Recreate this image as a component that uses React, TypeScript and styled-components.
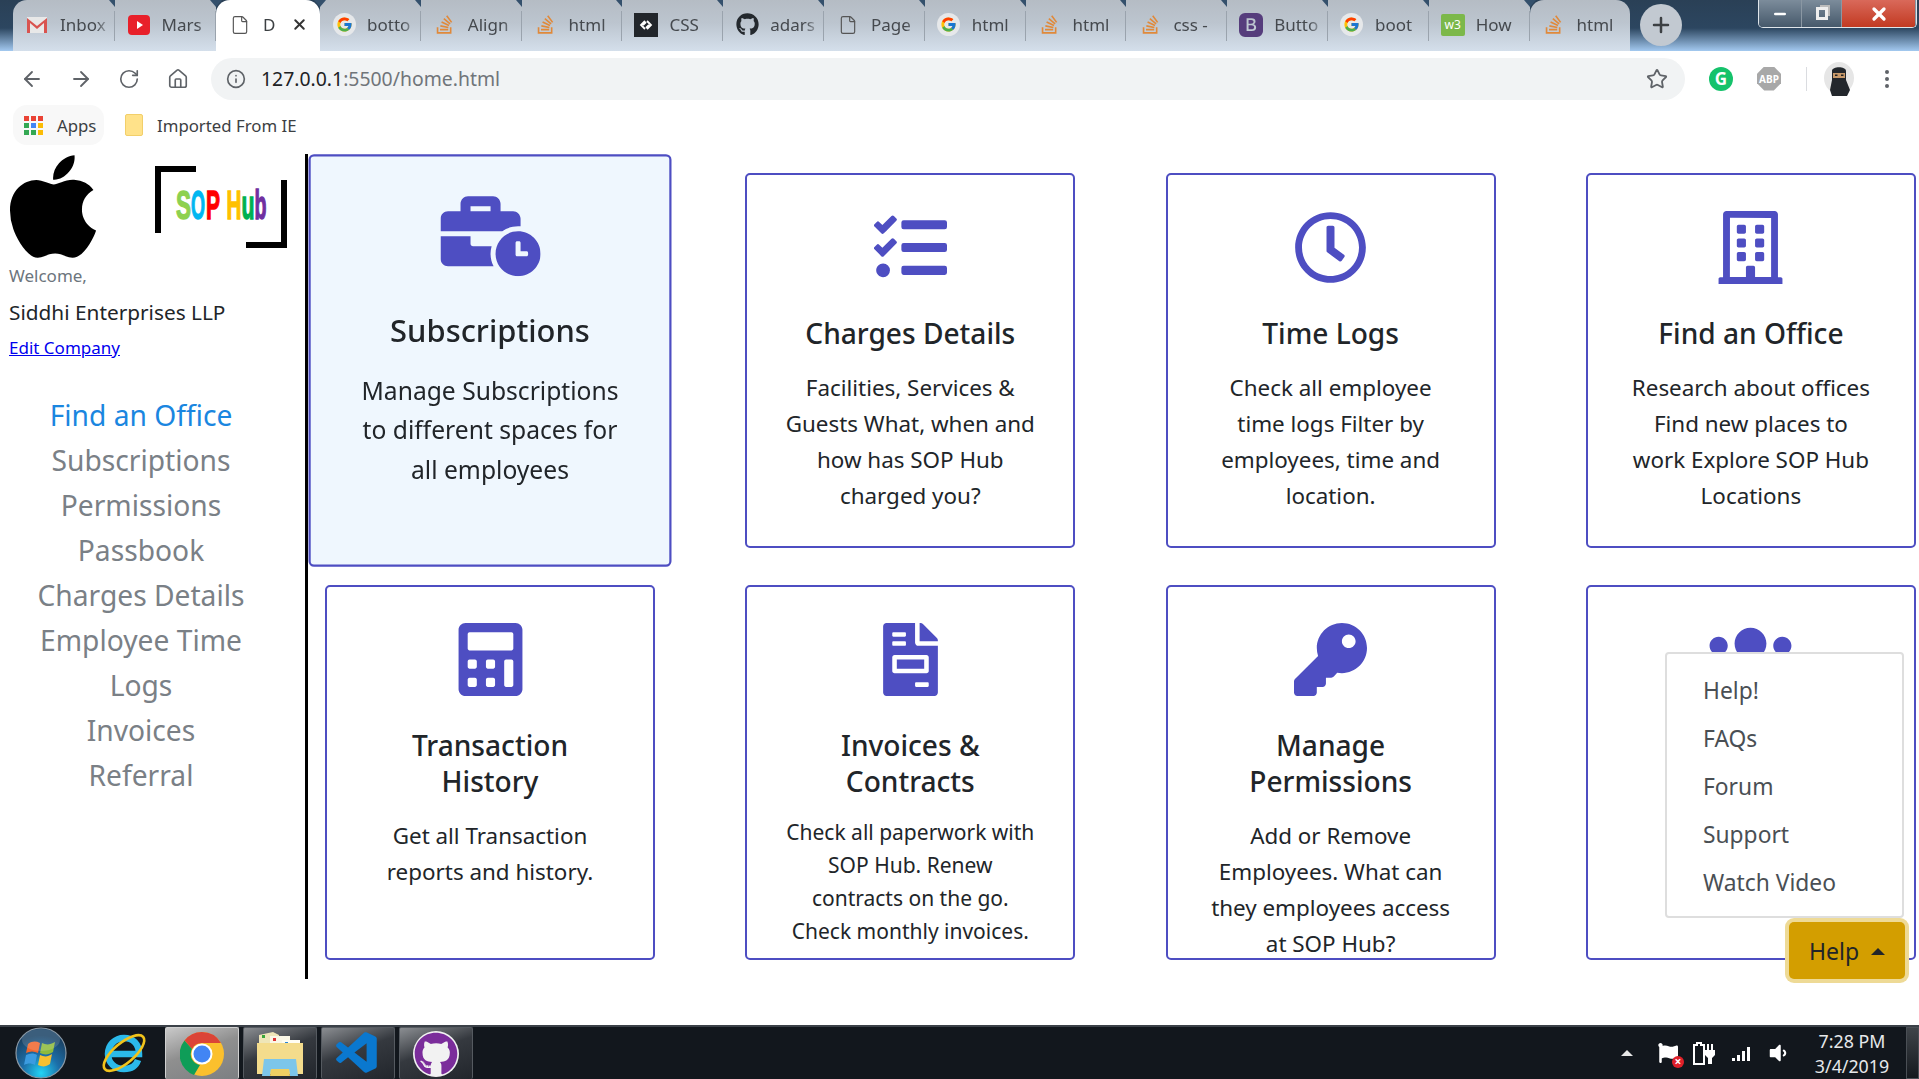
import React from "react";
import styled, { createGlobalStyle } from "styled-components";
import { ArrowLeft, ArrowRight, RotateCw, House, Info, Star, File, Plus, X, Minus } from "lucide-react";
import {
  FaBusinessTime,
  FaTasks,
  FaRegClock,
  FaRegBuilding,
  FaCalculator,
  FaFileInvoice,
  FaKey,
  FaUsers,
  FaStackOverflow,
  FaGithub,
  FaFlag,
  FaVolumeDown,
} from "react-icons/fa";
import { FcGoogle } from "react-icons/fc";
import { BsBootstrapFill } from "react-icons/bs";
import { VscVscode } from "react-icons/vsc";

const FONT = `"Noto Sans", "Open Sans", "Liberation Sans", sans-serif`;
const INDIGO = "#4e4ec2";

const GlobalStyle = createGlobalStyle`
  html, body { margin: 0; padding: 0; height: 100%; background: #fff; overflow: hidden; }
  body { font-family: ${FONT}; color: #212529; }
  * { box-sizing: border-box; }
`;

type TabIcon = "gmail" | "youtube" | "page" | "google" | "so" | "pen" | "github" | "bootstrap" | "w3";

const tabs: { icon: TabIcon; title: string; width: number; active?: boolean }[] = [
  { icon: "gmail", title: "Inbox", width: 101.5 },
  { icon: "youtube", title: "Mars", width: 101.5 },
  { icon: "page", title: "D", width: 104, active: true },
  { icon: "google", title: "botto", width: 100.8 },
  { icon: "so", title: "Align", width: 100.8 },
  { icon: "so", title: "html", width: 100.8 },
  { icon: "pen", title: "CSS", width: 100.8 },
  { icon: "github", title: "adars", width: 100.8 },
  { icon: "page", title: "Page", width: 100.8 },
  { icon: "google", title: "html", width: 100.8 },
  { icon: "so", title: "html", width: 100.8 },
  { icon: "so", title: "css -", width: 100.8 },
  { icon: "bootstrap", title: "Butto", width: 100.8 },
  { icon: "google", title: "boot", width: 100.8 },
  { icon: "w3", title: "How", width: 100.8 },
  { icon: "so", title: "html", width: 100.8 },
];

const navItems = [
  "Find an Office",
  "Subscriptions",
  "Permissions",
  "Passbook",
  "Charges Details",
  "Employee Time Logs",
  "Invoices",
  "Referral",
];

const cards = [
  {
    icon: <FaBusinessTime />,
    wide: true,
    title: ["Subscriptions"],
    text: ["Manage Subscriptions", "to different spaces for", "all employees"],
    hovered: true,
  },
  {
    icon: <FaTasks />,
    title: ["Charges Details"],
    text: ["Facilities, Services &", "Guests What, when and", "how has SOP Hub", "charged you?"],
  },
  {
    icon: <FaRegClock />,
    title: ["Time Logs"],
    text: ["Check all employee", "time logs Filter by", "employees, time and", "location."],
  },
  {
    icon: <FaRegBuilding />,
    title: ["Find an Office"],
    text: ["Research about offices", "Find new places to", "work Explore SOP Hub", "Locations"],
  },
  {
    icon: <FaCalculator />,
    title: ["Transaction", "History"],
    text: ["Get all Transaction", "reports and history."],
  },
  {
    icon: <FaFileInvoice />,
    title: ["Invoices &", "Contracts"],
    text: ["Check all paperwork with", "SOP Hub. Renew", "contracts on the go.", "Check monthly invoices."],
    small: true,
  },
  {
    icon: <FaKey />,
    title: ["Manage", "Permissions"],
    text: ["Add or Remove", "Employees. What can", "they employees access", "at SOP Hub?"],
  },
  {
    icon: <FaUsers />,
    wide: true,
    title: [],
    text: [],
  },
];

const helpItems = ["Help!", "FAQs", "Forum", "Support", "Watch Video"];

// adv = advance width of the letter at font size 40, used to squeeze it to w
const sopLetters = [
  { ch: "S", x: 21, w: 15, adv: 26.7, fill: "#8dd14f" },
  { ch: "O", x: 36, w: 14, adv: 31.1, fill: "#00b7f1" },
  { ch: "P", x: 51, w: 14, adv: 26.7, fill: "#ff0000" },
  { ch: "H", x: 71.500, w: 15, adv: 28.9, fill: "#ffc000" },
  { ch: "u", x: 86.500, w: 13, adv: 24.4, fill: "#00b050" },
  { ch: "b", x: 99.500, w: 12, adv: 24.4, fill: "#7030a0" },
];

const Favicon = ({ kind }: { kind: TabIcon }) => {
  switch (kind) {
    case "gmail":
      return (
        <svg width="22" height="18" viewBox="0 0 22 18">
          <rect x="1" y="1" width="20" height="16" fill="#e8e8e8" />
          <path d="M1 17V2l10 8 10-8v15h-3V7l-7 6-7-6v10z" fill="#d9534f" />
        </svg>
      );
    case "youtube":
      return (
        <svg width="22" height="20" viewBox="0 0 22 20">
          <rect width="22" height="20" rx="4" fill="#e8202a" />
          <path d="M9 6l6 4-6 4z" fill="#fff" />
        </svg>
      );
    case "page":
      return <File size={20} color="#555" strokeWidth={1.4} />;
    case "google":
      return (
        <GoogleDisc>
          <FcGoogle size={17} />
        </GoogleDisc>
      );
    case "so":
      return <FaStackOverflow size={21} color="#e0893a" />;
    case "pen":
      return (
        <svg width="24" height="24" viewBox="0 0 24 24">
          <rect width="24" height="24" fill="#22262b" />
          <path d="M11 8l-4 4 4 4M13 8l4 4-4 4M9 12l3-3M15 12l-3 3" fill="none" stroke="#fff" strokeWidth="1.8" />
        </svg>
      );
    case "github":
      return <FaGithub size={23} color="#24292e" />;
    case "bootstrap":
      return <BsBootstrapFill size={24} color="#563d7c" />;
    case "w3":
      return <W3Badge>w3</W3Badge>;
  }
};

const AppleLogo = () => (
  <AppleSvg viewBox="4 32 376 448">
    <path d="M318.7 268.7c-.2-36.7 16.4-64.4 50-84.8-18.8-26.9-47.2-41.7-84.7-44.6-35.5-2.8-74.3 20.7-88.5 20.7-15 0-49.4-19.7-76.4-19.7C63.3 141.2 4 184.8 4 273.5q0 39.3 14.4 81.2c12.8 36.7 59 126.7 107.2 125.2 25.2-.6 43-17.9 75.8-17.9 31.8 0 48.3 17.9 76.4 17.9 48.6-.7 90.4-82.5 102.6-119.3-65.2-30.7-61.7-90-61.7-91.9zm-56.6-164.2c27.3-32.4 24.8-61.9 24-72.5-24.1 1.4-52 16.4-67.9 34.9-17.5 19.8-27.8 44.3-25.6 71.9 26.1 2 49.9-11.4 69.5-34.3z" />
  </AppleSvg>
);

const SopLogo = () => (
  <svg width="132" height="82" viewBox="0 0 132 82">
    <path d="M3 67V3h38" fill="none" stroke="#000" strokeWidth="6" />
    <path d="M129 14v65H91" fill="none" stroke="#000" strokeWidth="6" />
    {sopLetters.map((l) => (
      <text
        key={l.ch}
        transform={`translate(${l.x} 53) scale(${l.w / l.adv} 1)`}
        fill={l.fill}
        stroke={l.fill}
        strokeWidth="1.4"
        fontFamily="Liberation Sans, sans-serif"
        fontWeight="700"
        fontSize="40"
      >
        {l.ch}
      </text>
    ))}
  </svg>
);

const WindowsOrb = () => (
  <svg width="52" height="52" viewBox="0 0 52 52">
    <defs>
      <radialGradient id="orb" cx="50%" cy="90%" r="75%">
        <stop offset="0" stopColor="#22d4f5" />
        <stop offset="0.5" stopColor="#1c6ea8" />
        <stop offset="1" stopColor="#1b4467" />
      </radialGradient>
    </defs>
    <circle cx="26" cy="26" r="25" fill="url(#orb)" stroke="#8a99a6" strokeWidth="1.2" />
    <path d="M13 17c4-3 8-3 12-1l-2 10c-4-2-8-2-12 0z" fill="#f0672e" />
    <path d="M27 16c4 2 8 2 13-1l-2 10c-4 3-9 3-13 1z" fill="#8dbb3c" />
    <path d="M11 28c4-2 8-2 11 0l-2 10c-4-2-7-2-11 0z" fill="#3b9be0" />
    <path d="M25 28c4 2 8 2 12-1l-2 10c-4 3-8 3-12 1z" fill="#f7c02f" />
    <ellipse cx="26" cy="13" rx="19" ry="11" fill="#fff" opacity="0.14" />
  </svg>
);

const IeLogo = () => (
  <svg width="48" height="48" viewBox="0 0 48 48">
    <path d="M10 25h29c0-10-6-16-15-16S8 16 8 25s7 15 16 15c7 0 12-3 14-9" fill="none" stroke="#2bb9ea" strokeWidth="6.5" />
    <ellipse cx="24" cy="24" rx="25" ry="10" transform="rotate(-40 24 24)" fill="none" stroke="#f1c31b" strokeWidth="2.6" />
  </svg>
);

const ChromeLogo = () => (
  <svg width="44" height="44" viewBox="0 0 44 44">
    <circle cx="22" cy="22" r="22" fill="#fbc02d" />
    <path d="M22 0a22 22 0 0 1 19 11H22a11 11 0 0 0-10 6L4.500 8.500A22 22 0 0 1 22 0z" fill="#db4437" />
    <path d="M4.500 8.500L12 17a11 11 0 0 0 8 16l-6 10A22 22 0 0 1 4.500 8.500z" fill="#0f9d58" />
    <circle cx="22" cy="22" r="10.500" fill="#fff" />
    <circle cx="22" cy="22" r="8.500" fill="#4285f4" />
  </svg>
);

const FolderLogo = () => (
  <svg width="48" height="46" viewBox="0 0 48 46">
    <path d="M3 4l14-3 6 3v10H3z" fill="#efe6b8" />
    <rect x="14" y="5" width="20" height="12" fill="#faf7e6" />
    <rect x="26" y="9" width="18" height="10" fill="#fffdf2" />
    <rect x="6" y="4" width="3" height="3" fill="#3aa63a" />
    <rect x="17" y="7" width="3" height="3" fill="#d33" />
    <rect x="29" y="11" width="3" height="3" fill="#2a86d8" />
    <path d="M1 12h46v31H1z" fill="#f4dc8c" />
    <path d="M6 45l2-17h32l2 17h-8l-1-7H15l-1 7z" fill="#7cc6ea" />
    <path d="M15 38h18l1 7H14z" fill="#f0d063" />
  </svg>
);

const BatteryIcon = () => (
  <svg width="24" height="24" viewBox="0 0 24 24">
    <path d="M1 4h3V2h4v2h3v19H1z" fill="none" stroke="#fff" strokeWidth="2" />
    <path d="M12 9h10v5l-3 3v6h-4v-6l-3-3zM14 3h2v6h-2zM18 3h2v6h-2z" fill="#fff" />
  </svg>
);

const NinjaAvatar = () => (
  <svg width="32" height="34" viewBox="0 0 32 34">
    <ellipse cx="16" cy="16" rx="15" ry="16" fill="#e6e6e6" />
    <path d="M9 9c0-5 14-5 14 0v9l4 10-3 6H9l-2-6 2-10z" fill="#23272c" />
    <rect x="10" y="11" width="12" height="5" fill="#c99a6b" />
    <rect x="12" y="12.500" width="2.500" height="1.500" fill="#222" />
    <rect x="18" y="12.500" width="2.500" height="1.500" fill="#222" />
  </svg>
);

const App: React.FC = () => {
  return (
    <Screen>
      <GlobalStyle />
      <TabStrip>
        {tabs.map((tab, index) => (
          <Tab key={index} $width={tab.width} $active={tab.active} $last={index === tabs.length - 1}>
            <FaviconSlot>
              <Favicon kind={tab.icon} />
            </FaviconSlot>
            <TabTitle>{tab.title}</TabTitle>
            {tab.active && (
              <TabClose>
                <X size={17} strokeWidth={2.8} />
              </TabClose>
            )}
          </Tab>
        ))}
        <NewTab>
          <Plus size={24} strokeWidth={2.5} />
        </NewTab>
        <WindowControls>
          <WinButton $width={43}>
            <Minus size={16} strokeWidth={4} />
          </WinButton>
          <WinButton $width={40}>
            <RestoreIcon />
          </WinButton>
          <WinButton $width={74} $close>
            <X size={20} strokeWidth={4} />
          </WinButton>
        </WindowControls>
      </TabStrip>

      <Toolbar>
        <NavIcon>
          <ArrowLeft size={24} strokeWidth={1.8} />
        </NavIcon>
        <NavIcon>
          <ArrowRight size={24} strokeWidth={1.8} />
        </NavIcon>
        <NavIcon>
          <RotateCw size={22} strokeWidth={1.8} />
        </NavIcon>
        <NavIcon>
          <House size={22} strokeWidth={1.8} />
        </NavIcon>
        <AddressBar>
          <Info size={20} strokeWidth={2} />
          <Url>
            <b>127.0.0.1</b>:5500/home.html
          </Url>
          <StarSlot>
            <Star size={22} strokeWidth={2} />
          </StarSlot>
        </AddressBar>
        <ExtensionSlot>
          <GrammarlyIcon>G</GrammarlyIcon>
        </ExtensionSlot>
        <ExtensionSlot>
          <AbpIcon>ABP</AbpIcon>
        </ExtensionSlot>
        <ToolbarDivider />
        <Avatar>
          <NinjaAvatar />
        </Avatar>
        <MenuDots>
          <i />
          <i />
          <i />
        </MenuDots>
      </Toolbar>

      <BookmarkBar>
        <AppsPill>
          <AppsGrid>
            {["#ea4335", "#ea4335", "#ea4335", "#34a853", "#4285f4", "#fbbc05", "#34a853", "#34a853", "#fbbc05"].map((c, i) => (
              <AppsDot key={i} $color={c} />
            ))}
          </AppsGrid>
          Apps
        </AppsPill>
        <BookmarkFolder />
        <BookmarkLabel>Imported From IE</BookmarkLabel>
      </BookmarkBar>

      <Page>
        <Sidebar>
          <Brand>
            <AppleLogo />
            <SopLogo />
          </Brand>
          <Welcome>Welcome,</Welcome>
          <Company>Siddhi Enterprises LLP</Company>
          <EditLink href="#">Edit Company</EditLink>
          <SideNav>
            {navItems.map((item, index) => (
              <SideLink key={item} $active={index === 0}>
                {item}
              </SideLink>
            ))}
          </SideNav>
        </Sidebar>
        <CardGrid>
          {cards.map((card, index) => (
            <Card key={index} $hovered={card.hovered}>
              <CardIcon $wide={card.wide}>{card.icon}</CardIcon>
              {card.title.length > 0 && (
                <CardTitle>
                  {card.title.map((line) => (
                    <Line key={line}>{line}</Line>
                  ))}
                </CardTitle>
              )}
              {card.text.length > 0 && (
                <CardText $small={card.small}>
                  {card.text.map((line) => (
                    <Line key={line}>{line}</Line>
                  ))}
                </CardText>
              )}
            </Card>
          ))}
        </CardGrid>
        <HelpMenu>
          {helpItems.map((item) => (
            <HelpItem key={item}>{item}</HelpItem>
          ))}
        </HelpMenu>
        <HelpButton>
          Help
          <Caret />
        </HelpButton>
      </Page>

      <Taskbar>
        <OrbSlot>
          <WindowsOrb />
        </OrbSlot>
        <IeSlot>
          <IeLogo />
        </IeSlot>
        <TaskTile $active>
          <ChromeLogo />
        </TaskTile>
        <TaskTile>
          <FolderLogo />
        </TaskTile>
        <TaskTile>
          <VscVscode size={50} color="#0a78cf" />
        </TaskTile>
        <TaskTile>
          <GithubDisc>
            <FaGithub size={44} color="#7b2d9b" />
          </GithubDisc>
        </TaskTile>
        <Tray>
          <TraySlot $width={50}>
            <TrayCaret />
          </TraySlot>
          <TraySlot $width={36}>
            <FlagSlot>
              <FaFlag size={20} color="#fff" />
              <FlagBadge>×</FlagBadge>
            </FlagSlot>
          </TraySlot>
          <TraySlot $width={34}>
            <BatteryIcon />
          </TraySlot>
          <TraySlot $width={37}>
            <SignalBars>
              {[3, 6, 10, 14].map((h) => (
                <SignalBar key={h} $height={h} />
              ))}
            </SignalBars>
          </TraySlot>
          <TraySlot $width={38}>
            <FaVolumeDown size={22} color="#fff" />
          </TraySlot>
          <Clock>
            <span>7:28 PM</span>
            <span>3/4/2019</span>
          </Clock>
          <ShowDesktop />
        </Tray>
      </Taskbar>
    </Screen>
  );
};

export default App;

const Screen = styled.div`
  width: 1919px;
  height: 1079px;
  display: flex;
  flex-direction: column;
  overflow: hidden;
`;

const TabStrip = styled.div`
  height: 51px;
  flex: none;
  display: flex;
  padding-left: 13px;
  background: linear-gradient(180deg, #2a4056 0%, #2c4660 55%, #a3c9f0 100%);
`;

const Tab = styled.div<{ $width: number; $active?: boolean; $last?: boolean }>`
  position: relative;
  width: ${(p) => p.$width}px;
  flex: none;
  display: flex;
  align-items: center;
  padding: 0 8px 2px 12px;
  gap: 11px;
  color: ${(p) => (p.$active ? "#3c4043" : "#45494e")};
  background: ${(p) => (p.$active ? "#fff" : "linear-gradient(180deg, #b5bcc4 0%, #bcc5cf 45%, #d4dfeb 100%)")};
  border-radius: ${(p) => (p.$active || p.$last ? "14px 14px 0 0" : "0")};
  z-index: ${(p) => (p.$active ? 1 : 0)};
  &:first-child {
    border-radius: 14px 0 0 0;
  }
  &::after {
    content: "";
    display: ${(p) => (p.$active || p.$last ? "none" : "block")};
    position: absolute;
    right: 0;
    top: 11px;
    height: 30px;
    width: 1px;
    background: #9aa3ad;
  }
  &::before {
    content: "";
    display: ${(p) => (p.$last ? "none" : "block")};
    position: absolute;
    right: -6px;
    top: 0;
    border-left: 6px solid transparent;
    border-right: 6px solid transparent;
    border-top: 7px solid #34506c;
    z-index: 2;
  }
`;

const FaviconSlot = styled.span`
  width: 24px;
  height: 24px;
  flex: none;
  display: flex;
  align-items: center;
  justify-content: center;
`;

const GoogleDisc = styled.span`
  width: 23px;
  height: 23px;
  border-radius: 50%;
  background: #e6e8ea;
  display: flex;
  align-items: center;
  justify-content: center;
`;

const W3Badge = styled.span`
  width: 24px;
  height: 22px;
  background: #7cb84a;
  color: #fff;
  font-size: 12px;
  line-height: 22px;
  text-align: center;
  border-radius: 2px;
`;

const TabTitle = styled.span`
  flex: 1;
  min-width: 0;
  overflow: hidden;
  white-space: nowrap;
  font-size: 17px;
  -webkit-mask-image: linear-gradient(90deg, #000 75%, rgba(0, 0, 0, 0.35) 100%);
  mask-image: linear-gradient(90deg, #000 75%, rgba(0, 0, 0, 0.35) 100%);
`;

const TabClose = styled.span`
  display: flex;
  color: #333;
  margin-right: 4px;
`;

const NewTab = styled.div`
  width: 42px;
  height: 42px;
  margin: 4px 0 0 10px;
  border-radius: 50%;
  background: #c2c9d1;
  color: #3c4043;
  display: flex;
  align-items: center;
  justify-content: center;
`;

const WindowControls = styled.div`
  margin-left: auto;
  margin-right: 2px;
  height: 28px;
  display: flex;
  border: 1px solid #dfe5ea;
  border-top: none;
  border-radius: 0 0 5px 5px;
  overflow: hidden;
`;

const WinButton = styled.div<{ $width: number; $close?: boolean }>`
  width: ${(p) => p.$width}px;
  display: flex;
  align-items: center;
  justify-content: center;
  color: #fff;
  border-right: 1px solid #8a97a3;
  background: ${(p) =>
    p.$close ? "linear-gradient(180deg, #d9695a, #c23a22)" : "linear-gradient(180deg, #7c8c9b, #46596b)"};
`;

const RestoreIcon = styled.span`
  width: 12px;
  height: 13px;
  border: 3px solid #eee;
  box-shadow: 3px -3px 0 -1px #bbb;
`;

const Toolbar = styled.div`
  height: 54px;
  flex: none;
  background: #fff;
  display: flex;
  align-items: center;
  padding-left: 8px;
  padding-top: 1px;
  color: #5f6368;
`;

const NavIcon = styled.span`
  width: 48.500px;
  display: flex;
  justify-content: center;
  color: #5f6368;
`;

const AddressBar = styled.div`
  width: 1474px;
  height: 42px;
  margin: 0 12px 0 9px;
  border-radius: 21px;
  background: #f1f3f4;
  display: flex;
  align-items: center;
  padding-left: 15px;
  color: #5f6368;
`;

const Url = styled.span`
  margin-left: 15px;
  font-size: 19.400px;
  color: #70757a;
  b {
    font-weight: 400;
    color: #202124;
  }
`;

const StarSlot = styled.span`
  margin-left: auto;
  margin-right: 17px;
  display: flex;
`;

const ExtensionSlot = styled.span`
  width: 48px;
  display: flex;
  justify-content: center;
`;

const GrammarlyIcon = styled.span`
  width: 24px;
  height: 24px;
  border-radius: 50%;
  background: #15c26b;
  color: #fff;
  font-size: 17px;
  font-weight: 700;
  line-height: 24px;
  text-align: center;
`;

const AbpIcon = styled.span`
  width: 24px;
  height: 24px;
  background: #a8a8a8;
  color: #fff;
  font-size: 10px;
  font-weight: 700;
  line-height: 24px;
  text-align: center;
  clip-path: polygon(30% 0, 70% 0, 100% 30%, 100% 70%, 70% 100%, 30% 100%, 0 70%, 0 30%);
`;

const ToolbarDivider = styled.span`
  width: 1px;
  height: 24px;
  background: #dadce0;
  margin: 0 16px 0 13px;
`;

const Avatar = styled.span`
  display: flex;
`;

const MenuDots = styled.span`
  margin-left: 30px;
  display: flex;
  flex-direction: column;
  gap: 3px;
  i {
    width: 4px;
    height: 4px;
    border-radius: 50%;
    background: #5f6368;
  }
`;

const BookmarkBar = styled.div`
  height: 40px;
  flex: none;
  background: #fff;
  display: flex;
  align-items: center;
  padding-left: 13px;
  font-size: 16.800px;
  color: #3c4043;
`;

const AppsPill = styled.div`
  width: 91px;
  height: 40px;
  border-radius: 14px;
  background: #f8f8f8;
  display: flex;
  align-items: center;
  padding-left: 11px;
  gap: 14px;
`;

const AppsGrid = styled.span`
  display: grid;
  grid-template-columns: repeat(3, 5px);
  gap: 2px;
`;

const AppsDot = styled.i<{ $color: string }>`
  width: 5px;
  height: 5px;
  background: ${(p) => p.$color};
`;

const BookmarkFolder = styled.span`
  width: 18px;
  height: 22px;
  margin-left: 21px;
  background: #ffe28a;
  border: 1px solid #f2cf6a;
  border-radius: 2px;
`;

const BookmarkLabel = styled.span`
  margin-left: 14px;
`;

const Page = styled.div`
  flex: 1;
  min-height: 0;
  position: relative;
  display: flex;
  align-items: flex-start;
  padding-top: 9px;
  background: #fff;
`;

const Sidebar = styled.aside`
  width: 308px;
  height: 825px;
  flex: none;
  border-right: 3px solid #000;
  padding-left: 9px;
`;

const Brand = styled.div`
  display: flex;
  align-items: flex-start;
  height: 110px;
`;

const AppleSvg = styled.svg`
  width: 86px;
  height: 105px;
  margin: 0 59px 0 1px;
  fill: #000;
  flex: none;
  & + svg {
    margin-top: 12px;
  }
`;

const Welcome = styled.div`
  font-size: 17px;
  line-height: 24px;
  color: #6c757d;
`;

const Company = styled.div`
  margin-top: 9px;
  font-size: 20.800px;
  line-height: 30px;
  color: #212529;
`;

const EditLink = styled.a`
  display: block;
  margin-top: 9px;
  font-size: 17px;
  line-height: 24px;
  color: #0000ee;
`;

const SideNav = styled.nav`
  margin: 33px 0 0 -9px;
  width: 282px;
  padding: 0 20px;
  text-align: center;
`;

const SideLink = styled.div<{ $active?: boolean }>`
  font-size: 28.200px;
  line-height: 45px;
  color: ${(p) => (p.$active ? "#1a86e0" : "#7a8086")};
`;

const CardGrid = styled.main`
  display: grid;
  grid-template-columns: repeat(4, 330px);
  grid-auto-rows: 375px;
  column-gap: 90.300px;
  row-gap: 37px;
  padding: 19px 0 0 17px;
`;

const Card = styled.article<{ $hovered?: boolean }>`
  border: 2px solid ${INDIGO};
  border-radius: 5px;
  padding-top: 36px;
  text-align: center;
  overflow: hidden;
  background: ${(p) => (p.$hovered ? "#eff7fe" : "#fff")};
  transform: ${(p) => (p.$hovered ? "scale(1.1)" : "none")};
`;

const CardIcon = styled.div<{ $wide?: boolean }>`
  height: 73px;
  color: ${INDIGO};
  svg {
    height: 73px;
    width: ${(p) => (p.$wide ? "91px" : "73px")};
    display: inline-block;
    vertical-align: top;
  }
`;

const CardTitle = styled.h3`
  margin: 31px 0 0;
  font-size: 28.100px;
  font-weight: 500;
  line-height: 36px;
  color: #212529;
`;

const CardText = styled.p<{ $small?: boolean }>`
  margin: ${(p) => (p.$small ? "17px" : "19px")} 0 0;
  font-size: ${(p) => (p.$small ? "21px" : "22.400px")};
  line-height: ${(p) => (p.$small ? "33px" : "36px")};
  color: #212529;
`;

const Line = styled.span`
  display: block;
  white-space: nowrap;
`;

const HelpMenu = styled.div`
  position: absolute;
  left: 1665px;
  top: 507px;
  width: 239px;
  height: 266px;
  padding: 13px 0 0 36px;
  background: #fff;
  border: 2px solid #dedede;
  border-radius: 4px;
`;

const HelpItem = styled.div`
  font-size: 22.800px;
  line-height: 48px;
  color: #4a4f54;
`;

const HelpButton = styled.button`
  position: absolute;
  left: 1789px;
  top: 777px;
  width: 116px;
  height: 57px;
  padding-top: 2px;
  display: flex;
  align-items: center;
  justify-content: center;
  gap: 12px;
  border: none;
  border-radius: 5px;
  background: #d39e00;
  color: #212529;
  font-family: ${FONT};
  font-size: 23px;
  box-shadow: 0 0 0 4px #eeda96;
`;

const Caret = styled.i`
  border-left: 7px solid transparent;
  border-right: 7px solid transparent;
  border-bottom: 7px solid #212529;
`;

const Taskbar = styled.footer`
  height: 54px;
  flex: none;
  display: flex;
  align-items: stretch;
  background: #12171d;
  border-top: 2px solid #3b4148;
`;

const OrbSlot = styled.div`
  width: 82px;
  display: flex;
  align-items: center;
  justify-content: center;
`;

const IeSlot = styled.div`
  width: 83px;
  display: flex;
  align-items: center;
  justify-content: center;
`;

const TaskTile = styled.div<{ $active?: boolean }>`
  width: 74px;
  margin-right: 4px;
  display: flex;
  align-items: center;
  justify-content: center;
  border: 1px solid ${(p) => (p.$active ? "#d0d0d0" : "#555a60")};
  border-bottom: none;
  border-radius: 2px;
  background: ${(p) =>
    p.$active
      ? "linear-gradient(160deg, #c9c9c9 0%, #8f8f8f 45%, #7c7f82 100%)"
      : "linear-gradient(160deg, #8b8e92 0%, #35393f 45%, #22262c 100%)"};
`;

const GithubDisc = styled.span`
  width: 46px;
  height: 46px;
  border-radius: 50%;
  background: #f2f2f2;
  display: flex;
  align-items: center;
  justify-content: center;
`;

const Tray = styled.div`
  margin-left: auto;
  display: flex;
  align-items: center;
`;

const TraySlot = styled.span<{ $width: number }>`
  width: ${(p) => p.$width}px;
  display: flex;
  justify-content: center;
  align-items: center;
`;

const TrayCaret = styled.i`
  border-left: 6px solid transparent;
  border-right: 6px solid transparent;
  border-bottom: 6px solid #e8e8e8;
`;

const FlagSlot = styled.span`
  position: relative;
  display: flex;
  width: 24px;
`;

const FlagBadge = styled.span`
  position: absolute;
  right: -2px;
  bottom: -5px;
  width: 12px;
  height: 12px;
  border-radius: 50%;
  background: #e0202a;
  color: #fff;
  font-size: 12px;
  font-weight: 700;
  line-height: 12px;
  text-align: center;
`;

const SignalBars = styled.span`
  display: flex;
  align-items: flex-end;
  gap: 2px;
  height: 15px;
`;

const SignalBar = styled.i<{ $height: number }>`
  width: 3px;
  height: ${(p) => p.$height}px;
  background: #fff;
`;

const Clock = styled.div`
  width: 92px;
  margin: 1px 8px 0 9px;
  display: flex;
  flex-direction: column;
  align-items: center;
  font-size: 17.800px;
  line-height: 25px;
  color: #e6e8ea;
  white-space: nowrap;
`;

const ShowDesktop = styled.span`
  align-self: stretch;
  width: 13px;
  border: 1px solid #4a4f55;
  background: linear-gradient(180deg, #3f4449, #15191e);
`;
